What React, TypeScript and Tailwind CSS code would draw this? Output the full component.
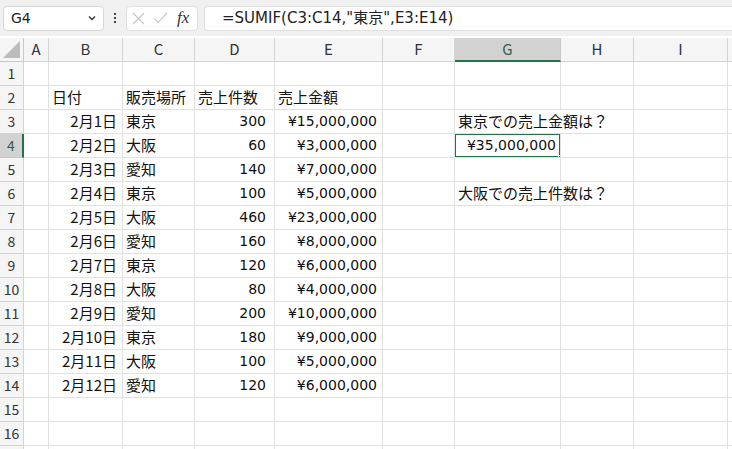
import React from "react";

const cols = ["A", "B", "C", "D", "E", "F", "G", "H", "I", ""];

type Cell = { t: string; r?: boolean; num?: boolean };

const data: Record<number, Record<string, Cell>> = {
  2: { B: { t: "日付" }, C: { t: "販売場所" }, D: { t: "売上件数" }, E: { t: "売上金額" } },
};

const rows: [string, string, string, string][] = [
  ["2月1日", "東京", "300", "¥15,000,000"],
  ["2月2日", "大阪", "60", "¥3,000,000"],
  ["2月3日", "愛知", "140", "¥7,000,000"],
  ["2月4日", "東京", "100", "¥5,000,000"],
  ["2月5日", "大阪", "460", "¥23,000,000"],
  ["2月6日", "愛知", "160", "¥8,000,000"],
  ["2月7日", "東京", "120", "¥6,000,000"],
  ["2月8日", "大阪", "80", "¥4,000,000"],
  ["2月9日", "愛知", "200", "¥10,000,000"],
  ["2月10日", "東京", "180", "¥9,000,000"],
  ["2月11日", "大阪", "100", "¥5,000,000"],
  ["2月12日", "愛知", "120", "¥6,000,000"],
];
rows.forEach((r, i) => {
  data[i + 3] = {
    B: { t: r[0], r: true },
    C: { t: r[1] },
    D: { t: r[2], r: true, num: true },
    E: { t: r[3], r: true, num: true },
  };
});
data[3].G = { t: "東京での売上金額は？" };
data[4].G = { t: "¥35,000,000", r: true, num: true };
data[6].G = { t: "大阪での売上件数は？" };

const font = { fontFamily: '"Noto Sans CJK JP", "Noto Sans", sans-serif' };
const latin = { fontFamily: '"DejaVu Sans", "Noto Sans CJK JP", sans-serif' };

// right padding per column, as Excel leaves it
const padRight: Record<string, string> = { B: "pr-[5px]", D: "pr-[8px]", E: "pr-[5px]", G: "pr-[4px]" };

function FormulaBar() {
  return (
    <div className="flex h-[36px] items-center bg-[#f0f0f0] pl-[3px]">
      <div
        className="flex h-[25px] w-[101px] items-center justify-between rounded-[4px] border border-[#d6d6d6] bg-white pl-[7px] pr-[6px] text-[14px] text-[#222]"
        style={latin}
      >
        <span>G4</span>
        <svg width="10" height="10" viewBox="0 0 10 10">
          <path d="M2 3.5 L5 6.5 L8 3.5" stroke="#333" strokeWidth="1.4" fill="none" />
        </svg>
      </div>
      <div className="flex w-[22px] flex-col items-center gap-[2px]">
        <span className="h-[2px] w-[2px] bg-[#444]" />
        <span className="h-[2px] w-[2px] bg-[#444]" />
        <span className="h-[2px] w-[2px] bg-[#444]" />
      </div>
      <div className="flex h-[25px] w-[72px] items-center gap-[8px] rounded-[4px] border border-[#e0e0e0] bg-white pl-[5px]">
        <svg width="13" height="13" viewBox="0 0 13 13">
          <path d="M1 1 L12 12 M12 1 L1 12" stroke="#c4c4c4" strokeWidth="1.1" fill="none" />
        </svg>
        <svg width="15" height="12" viewBox="0 0 15 12">
          <path d="M1 6 L5 10.5 L14 1" stroke="#c4c4c4" strokeWidth="1.1" fill="none" />
        </svg>
        <span className="ml-[1px] text-[17px] italic text-[#333]" style={{ fontFamily: '"Liberation Serif", serif' }}>
          fx
        </span>
      </div>
      <div
        className="ml-[6px] flex h-[25px] flex-1 items-center rounded-l-[4px] border border-r-0 border-[#e0e0e0] bg-white pl-[17px] text-[15px] text-[#222]"
        style={latin}
      >
        =SUMIF(C3:C14,"東京",E3:E14)
      </div>
    </div>
  );
}

export default function App() {
  const gridCols = "grid-cols-[24px_25px_74px_72px_80px_108px_72px_106px_73px_94px_1fr]";
  return (
    <div className="h-[449px] w-[732px] overflow-hidden bg-white" style={font}>
      <FormulaBar />
      <div className="h-[2px] bg-white" />
      <div className={`grid ${gridCols} auto-rows-[24px]`}>
        {/* header row */}
        <div className="relative border-b border-r border-[#c8c8c8] bg-[#f5f5f5]">
          <svg className="absolute bottom-[3px] right-[3px]" width="17" height="17" viewBox="0 0 17 17">
            <path d="M17 0 L17 17 L0 17 Z" fill="#bcbcbc" />
          </svg>
        </div>
        {cols.map((c, i) => (
          <div
            key={i}
            className={
              c === "G"
                ? "flex items-center justify-center border-b-2 border-r border-b-[#217346] border-r-[#c8c8c8] bg-[#d2d2d2] text-[15px] text-[#3a5a45]"
                : "flex items-center justify-center border-b border-r border-[#d4d4d4] bg-[#f5f5f5] text-[15px] text-[#333]"
            }
          >
            {c}
          </div>
        ))}
        {Array.from({ length: 17 }, (_, ri) => {
          const rn = ri + 1;
          const rowData = data[rn] || {};
          return (
            <React.Fragment key={rn}>
              <div
                className={
                  rn === 4
                    ? "flex items-center justify-center border-b border-r-2 border-b-[#c8c8c8] border-r-[#217346] bg-[#d2d2d2] text-[14px] text-[#3a5a45]"
                    : "flex items-center justify-center border-b border-r border-[#d4d4d4] bg-[#f5f5f5] text-[14px] text-[#333]"
                }
              >
                {rn <= 16 ? rn : ""}
              </div>
              {cols.map((c, ci) => {
                const cell = rowData[c];
                const overflow = c === "G" && (rn === 3 || rn === 6);
                const active = c === "G" && rn === 4;
                return (
                  <div
                    key={ci}
                    className={[
                      "relative flex items-center whitespace-nowrap border-b border-[#e1e1e1] pl-[3px] text-[15px] text-[#111]",
                      overflow ? "z-10 overflow-visible" : "overflow-hidden",
                      overflow || c === "" ? "" : "border-r",
                      cell?.r ? `justify-end ${padRight[c] ?? "pr-[4px]"}` : "justify-start pr-[3px]",
                    ].join(" ")}
                  >
                    {active && (
                      <>
                        <div className="pointer-events-none absolute -left-[1px] -top-[1px] bottom-[-1px] right-[-1px] border-2 border-[#217346]" />
                        <div className="absolute -bottom-[4px] -right-[4px] z-20 h-[6px] w-[6px] border border-white bg-[#217346]" />
                      </>
                    )}
                    {cell && (
                      <span className={cell.num ? "text-[14px]" : ""} style={cell.num ? latin : undefined}>
                        {cell.t}
                      </span>
                    )}
                  </div>
                );
              })}
            </React.Fragment>
          );
        })}
      </div>
    </div>
  );
}
